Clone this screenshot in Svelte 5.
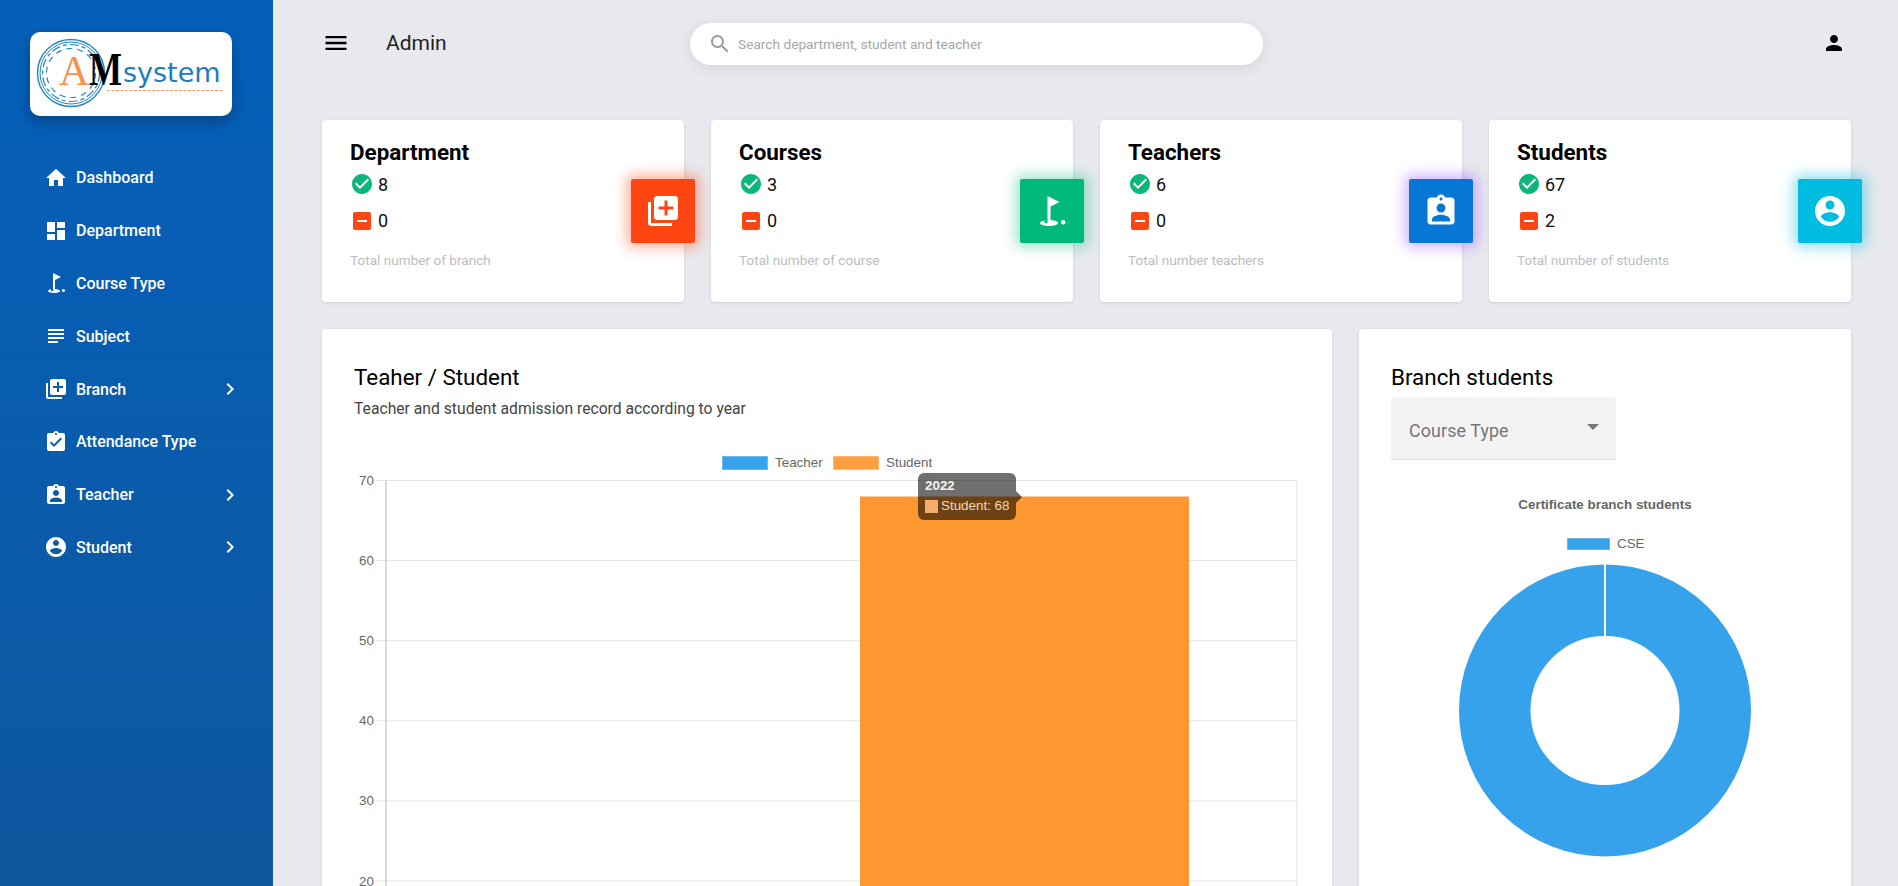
<script lang="ts">
  const icons = {
    home: 'M10 20v-6h4v6h5v-8h3L12 3 2 12h3v8z',
    dashboard: 'M3 13h8V3H3v10zm0 8h8v-6H3v6zm10 0h8V11h-8v10zm0-18v6h8V3h-8z',
    golf: 'M17 5.92L9 2v18H7v-1.73c-1.79.35-3 .99-3 1.73 0 1.1 2.69 2 6 2s6-.9 6-2c0-.99-2.16-1.81-5-1.97V8.98l6-3.06zM19.5 18a1.5 1.5 0 1 0 0 3 1.5 1.5 0 0 0 0-3z',
    subject: 'M14 17H4v2h10v-2zm6-8H4v2h16V9zM4 15h16v-2H4v2zM4 5v2h16V5H4z',
    library: 'M4 6H2v14c0 1.1.9 2 2 2h14v-2H4V6zm16-4H8c-1.1 0-2 .9-2 2v12c0 1.1.9 2 2 2h12c1.1 0 2-.9 2-2V4c0-1.1-.9-2-2-2zm-1 9h-4v4h-2v-4H9V9h4V5h2v4h4v2z',
    turnedIn: 'M19 3h-4.18C14.4 1.84 13.3 1 12 1c-1.3 0-2.4.84-2.82 2H5c-1.1 0-2 .9-2 2v14c0 1.1.9 2 2 2h14c1.1 0 2-.9 2-2V5c0-1.1-.9-2-2-2zm-7 0c.55 0 1 .45 1 1s-.45 1-1 1-1-.45-1-1 .45-1 1-1zm-2 14l-4-4 1.41-1.41L10 14.17l6.59-6.59L18 9l-8 8z',
    assignInd: 'M19 3h-4.18C14.4 1.84 13.3 1 12 1c-1.3 0-2.4.84-2.82 2H5c-1.1 0-2 .9-2 2v14c0 1.1.9 2 2 2h14c1.1 0 2-.9 2-2V5c0-1.1-.9-2-2-2zm-7 0c.55 0 1 .45 1 1s-.45 1-1 1-1-.45-1-1 .45-1 1-1zm0 4c1.66 0 3 1.34 3 3s-1.34 3-3 3-3-1.34-3-3 1.34-3 3-3zm6 12H6v-1.4c0-2 4-3.1 6-3.1s6 1.1 6 3.1V19z',
    account: 'M12 2C6.48 2 2 6.48 2 12s4.48 10 10 10 10-4.48 10-10S17.52 2 12 2zm0 3c1.66 0 3 1.34 3 3s-1.34 3-3 3-3-1.34-3-3 1.34-3 3-3zm0 14.2c-2.5 0-4.71-1.28-6-3.22.03-1.99 4-3.08 6-3.08 1.99 0 5.97 1.09 6 3.08-1.29 1.94-3.5 3.22-6 3.22z',
    chevron: 'M10 6L8.59 7.41 13.17 12l-4.58 4.59L10 18l6-6z',
    menu: 'M3 18h18v-2H3v2zm0-5h18v-2H3v2zm0-7v2h18V6H3z',
    search: 'M15.5 14h-.79l-.28-.27C15.41 12.59 16 11.11 16 9.5 16 5.91 13.09 3 9.5 3S3 5.91 3 9.5 5.91 16 9.5 16c1.61 0 3.09-.59 4.23-1.57l.27.28v.79l5 4.99L20.49 19l-4.99-5zm-6 0C7.01 14 5 11.99 5 9.5S7.01 5 9.5 5 14 7.01 14 9.5 11.99 14 9.5 14z',
    person: 'M12 12c2.21 0 4-1.79 4-4s-1.79-4-4-4-4 1.79-4 4 1.79 4 4 4zm0 2c-2.67 0-8 1.34-8 4v2h16v-2c0-2.66-5.33-4-8-4z',
    check: 'M12 2C6.48 2 2 6.48 2 12s4.48 10 10 10 10-4.48 10-10S17.52 2 12 2zm-2 15l-5-5 1.41-1.41L10 14.17l7.59-7.59L19 8l-9 9z',
    minus: 'M19 3H5c-1.1 0-2 .9-2 2v14c0 1.1.9 2 2 2h14c1.1 0 2-.9 2-2V5c0-1.1-.9-2-2-2zm-2 10H7v-2h10v2z',
  };

  const nav = [
    { label: 'Dashboard', icon: icons.home },
    { label: 'Department', icon: icons.dashboard },
    { label: 'Course Type', icon: icons.golf },
    { label: 'Subject', icon: icons.subject },
    { label: 'Branch', icon: icons.library, more: true },
    { label: 'Attendance Type', icon: icons.turnedIn },
    { label: 'Teacher', icon: icons.assignInd, more: true },
    { label: 'Student', icon: icons.account, more: true },
  ];

  const stats = [
    { title: 'Department', active: 8, inactive: 0, note: 'Total number of branch', icon: icons.library, tone: 'red' },
    { title: 'Courses', active: 3, inactive: 0, note: 'Total number of course', icon: icons.golf, tone: 'green' },
    { title: 'Teachers', active: 6, inactive: 0, note: 'Total number teachers', icon: icons.assignInd, tone: 'blue' },
    { title: 'Students', active: 67, inactive: 2, note: 'Total number of students', icon: icons.account, tone: 'cyan' },
  ];

  // chart scale, in svg units: value 70 sits at y=32.5, each unit is 8.01px
  const ticks = [70, 60, 50, 40, 30, 20];
  const yOf = (v: number) => 32.5 + (70 - v) * 8.01;
  const chartBottom = 440;
</script>

{#snippet icon(d: string, size = 24)}
  <svg class="icon" width={size} height={size} viewBox="0 0 24 24" aria-hidden="true"><path {d} /></svg>
{/snippet}

<div class="shell">
  <aside class="sidebar">
    <div class="logo">
      <svg width="202" height="84" viewBox="0 0 202 84" role="img" aria-label="AMsystem">
        <g fill="none" stroke="#1f86c6">
          <circle cx="41" cy="41" r="33.5" stroke-width="1.4" />
          <circle cx="41" cy="41" r="31" stroke-width="1" />
          <circle cx="41" cy="41" r="28.5" stroke-width="1.2" stroke-dasharray="9 3 4 3" />
          <circle cx="41" cy="41" r="24.5" stroke-width="1.2" stroke-dasharray="6 5" />
        </g>
        <text x="29" y="53" class="logo-a">A</text>
        <text x="59" y="53" class="logo-m" textLength="33" lengthAdjust="spacingAndGlyphs">M</text>
        <text x="93" y="50" class="logo-s">system</text>
        <line x1="77" y1="58.5" x2="194" y2="58.5" stroke="#f9a064" stroke-width="1.2" stroke-dasharray="3 1.5" />
      </svg>
    </div>
    <nav>
      {#each nav as item}
        <a class="nav-item" href="#top">
          {@render icon(item.icon)}
          <span>{item.label}</span>
          {#if item.more}
            <span class="chev">{@render icon(icons.chevron)}</span>
          {/if}
        </a>
      {/each}
    </nav>
  </aside>

  <main class="main">
    <header class="topbar">
      <div class="brand">
        {@render icon(icons.menu, 28)}
        <span class="admin">Admin</span>
      </div>
      <label class="search">
        {@render icon(icons.search)}
        <input type="text" placeholder="Search department, student and teacher" />
      </label>
      <span class="user">{@render icon(icons.person)}</span>
    </header>

    <section class="stats">
      {#each stats as s}
        <article class="card stat">
          <h3>{s.title}</h3>
          <div class="row ok">{@render icon(icons.check)}<span>{s.active}</span></div>
          <div class="row off">{@render icon(icons.minus)}<span>{s.inactive}</span></div>
          <p class="note">{s.note}</p>
          <div class="badge {s.tone}">{@render icon(s.icon, 36)}</div>
        </article>
      {/each}
    </section>

    <section class="charts">
      <article class="card panel">
        <h2>Teaher / Student</h2>
        <p class="sub">Teacher and student admission record according to year</p>
        <div class="bar-chart">
          <svg width="946" height={chartBottom} viewBox="0 0 946 {chartBottom}">
            <rect x="368.5" y="8.5" width="45" height="13" fill="#36a2eb" stroke="#6cbaf0" />
            <text x="421" y="19" class="chart-text">Teacher</text>
            <rect x="479.5" y="8.5" width="45" height="13" fill="#ff9f40" stroke="#ffb66e" />
            <text x="532" y="19" class="chart-text">Student</text>

            {#each ticks as t}
              <line x1="22" x2="943" y1={yOf(t)} y2={yOf(t)} stroke="#e4e4e4" />
              <text x="20" y={yOf(t) + 4.5} text-anchor="end" class="chart-text">{t}</text>
            {/each}
            <line x1="32" x2="32" y1={yOf(70)} y2={chartBottom} stroke="#b4b4b4" />
            <line x1="943" x2="943" y1={yOf(70)} y2={chartBottom} stroke="#e4e4e4" />
            <rect x="506" y={yOf(68)} width="329" height={chartBottom - yOf(68)} fill="#ff9830" />
          </svg>
          <div class="tooltip">
            <strong>2022</strong>
            <div class="tip-row"><i></i>Student: 68</div>
          </div>
        </div>
      </article>

      <article class="card panel">
        <h2>Branch students</h2>
        <div class="select">
          <span>Course Type</span>
          <i class="caret"></i>
        </div>
        <svg class="donut" width="428" height="380" viewBox="0 0 428 380">
          <text x="214" y="19" text-anchor="middle" class="chart-text bold">Certificate branch students</text>
          <rect x="176.5" y="48.5" width="42" height="11" fill="#36a2eb" stroke="#6cbaf0" />
          <text x="226" y="58" class="chart-text">CSE</text>
          <circle cx="214" cy="220.5" r="110.25" fill="none" stroke="#36a2eb" stroke-width="71.5" />
          <line x1="214" x2="214" y1="73" y2="147" stroke="#fff" stroke-width="2" />
        </svg>
      </article>
    </section>
  </main>
</div>

<style>
  :global(html), :global(body) {
    margin: 0;
    overflow: hidden;
  }
  .shell {
    display: flex;
    height: 100vh;
    overflow: hidden;
    background: #e8e9ee;
    font-family: Roboto, "Liberation Sans", sans-serif;
    color: #000;
  }
  .icon {
    display: block;
    flex: none;
    fill: currentColor;
  }

  .sidebar {
    flex: none;
    width: 273px;
    box-sizing: border-box;
    padding: 32px 0 0 0;
    background: linear-gradient(180deg, #0460bb 0%, #0f579e 100%);
    color: #fff;
  }
  .logo {
    width: 202px;
    height: 84px;
    margin-left: 30px;
    background: #fff;
    border-radius: 10px;
    box-shadow: 0 6px 14px rgba(0, 0, 0, 0.28);
  }
  .logo svg {
    display: block;
  }
  .logo-a {
    font: 400 42px "Liberation Serif", serif;
    fill: #f9914a;
  }
  .logo-m {
    font: 700 46px "Liberation Serif", serif;
    fill: #000;
  }
  .logo-s {
    font: 400 27px "DejaVu Sans", sans-serif;
    fill: #1c7cc0;
  }
  nav {
    margin-top: 35.5px;
  }
  .nav-item {
    display: flex;
    align-items: center;
    height: 52.8px;
    padding: 0 0 0 44px;
    gap: 8px;
    color: #fff;
    font-size: 16px;
    font-weight: 500;
    text-decoration: none;
  }
  .chev {
    margin-left: auto;
    margin-right: 31px;
  }

  .main {
    flex: 1;
    min-width: 0;
    padding: 0 47px 0 49px;
  }
  .topbar {
    display: grid;
    grid-template-columns: 368px 573px 1fr;
    align-items: center;
    height: 88px;
    margin-bottom: 32px;
  }
  .brand {
    display: flex;
    align-items: center;
    gap: 36px;
    margin-top: -2px;
  }
  .admin {
    font-size: 21px;
    color: #222;
  }
  .search {
    display: flex;
    align-items: center;
    height: 42px;
    padding-left: 18px;
    gap: 6px;
    border-radius: 21px;
    background: #fff;
    box-shadow: 0 3px 14px rgba(0, 0, 0, 0.09);
    color: #9e9e9e;
  }
  .search input {
    flex: 1;
    border: none;
    outline: none;
    padding: 0;
    background: none;
    font: 400 13.7px Roboto, sans-serif;
  }
  .search input::placeholder {
    color: #a6a6a6;
    opacity: 1;
  }
  .user {
    justify-self: end;
    padding-right: 5px;
    margin-top: -3px;
  }

  .card {
    background: #fff;
    border-radius: 4px;
    box-shadow: 0 1px 3px rgba(0, 0, 0, 0.12);
  }
  .stats {
    display: grid;
    grid-template-columns: repeat(4, 1fr);
    gap: 27px;
  }
  .stat {
    position: relative;
    height: 182px;
    box-sizing: border-box;
    padding: 18px 28px 0;
  }
  .stat h3 {
    margin: 0;
    font-size: 22.4px;
    font-weight: 700;
    line-height: 28px;
  }
  .row {
    display: flex;
    align-items: center;
    gap: 4px;
    height: 24px;
    font-size: 18px;
  }
  .row.ok {
    margin-top: 6px;
    color: #0cb57c;
  }
  .row.off {
    margin-top: 12.5px;
    color: #ff4612;
  }
  .row span {
    color: #111;
  }
  .note {
    margin: 17.5px 0 0;
    font-size: 13.6px;
    line-height: 20px;
    color: #bdbdbd;
  }
  .badge {
    position: absolute;
    top: 59px;
    right: -11px;
    display: flex;
    align-items: center;
    justify-content: center;
    width: 64px;
    height: 64px;
    border-radius: 2px;
    color: #fff;
  }
  .badge.red {
    background: #ff4612;
    box-shadow: 0 0 14px 4px rgba(255, 70, 18, 0.45);
  }
  .badge.green {
    background: #00b87a;
    box-shadow: 0 0 14px 4px rgba(0, 184, 122, 0.4);
  }
  .badge.blue {
    background: #0678d4;
    box-shadow: 0 0 14px 4px rgba(140, 70, 255, 0.42);
  }
  .badge.cyan {
    background: #00bce0;
    box-shadow: 0 0 14px 4px rgba(0, 188, 224, 0.45);
  }

  .charts {
    display: grid;
    grid-template-columns: 1010px 492px;
    gap: 27px;
    margin-top: 27px;
  }
  .panel {
    box-sizing: border-box;
    height: 800px;
    padding: 32px;
  }
  .panel h2 {
    margin: 0;
    font-size: 22.4px;
    font-weight: 400;
    line-height: 32px;
  }
  .sub {
    margin: 4px 0 0;
    font-size: 15.7px;
    line-height: 24px;
    color: #444;
  }
  .bar-chart {
    position: relative;
    margin-top: 27px;
  }
  .bar-chart svg,
  .donut {
    display: block;
  }
  .chart-text {
    font: 400 13.4px "Liberation Sans", Arial, sans-serif;
    fill: #666;
  }
  .chart-text.bold {
    font-weight: 700;
  }
  .tooltip {
    position: absolute;
    left: 564px;
    top: 25px;
    box-sizing: border-box;
    width: 98px;
    height: 47px;
    padding: 6px 0 0 7px;
    border-radius: 6px;
    background: rgba(0, 0, 0, 0.8);
    color: #eee;
    opacity: 0.7;
    font: 400 13.4px/14px "Liberation Sans", Arial, sans-serif;
    white-space: nowrap;
  }
  .tooltip::after {
    content: '';
    position: absolute;
    left: 100%;
    top: 18px;
    border: 6px solid transparent;
    border-right: 0;
    border-left-color: rgba(0, 0, 0, 0.8);
  }
  .tooltip strong {
    display: block;
  }
  .tip-row {
    display: flex;
    align-items: center;
    gap: 3px;
    margin-top: 6px;
  }
  .tip-row i {
    flex: none;
    width: 13px;
    height: 13px;
    background: #eeb686;
  }

  .select {
    display: flex;
    align-items: center;
    justify-content: space-between;
    box-sizing: border-box;
    width: 225px;
    height: 63px;
    margin-top: 4px;
    padding: 4px 17px 0 18px;
    background: #f3f3f3;
    border-bottom: 1px solid #e2e2e2;
    border-radius: 4px 4px 0 0;
    color: #757575;
    font-size: 17.8px;
    letter-spacing: 0.15px;
  }
  .caret {
    margin-top: -6px;
    border-top: 6px solid #757575;
    border-left: 6px solid transparent;
    border-right: 6px solid transparent;
  }
  .donut {
    margin-top: 30px;
  }
</style>
